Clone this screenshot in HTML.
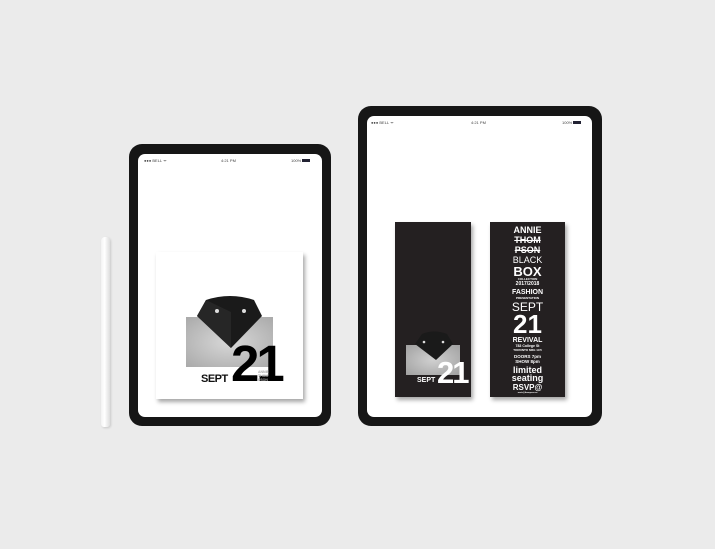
<!DOCTYPE html>
<html><head><style>
*{margin:0;padding:0;box-sizing:border-box}
body{width:715px;height:549px;background:#ebebeb;position:relative;overflow:hidden;font-family:"Liberation Sans",sans-serif}
.a{position:absolute}
.pad{background:#161616;border-radius:13px}
.scr{background:#fff;border-radius:7px}
.st{font-size:4px;color:#444;position:absolute}
.c2 div{position:absolute;left:0;width:75px;text-align:center;color:#fff;font-weight:bold;line-height:1}
</style></head><body>
<div class="a" style="left:101px;top:237px;width:9px;height:190px;background:linear-gradient(90deg,#f2f2f2,#fff 40%,#dcdcdc);border-radius:4px 4px 3px 3px;box-shadow:1px 1px 2px rgba(0,0,0,.15)"></div>
<div class="a pad" style="left:129px;top:144px;width:202px;height:282px"></div>
<div class="a scr" style="left:138px;top:154px;width:184px;height:263px"></div>
<div class="st" style="left:144px;top:158px">●●● BELL ᯤ</div>
<div class="st" style="left:221px;top:158px">4:21 PM</div>
<div class="st" style="left:291px;top:158px">100% <span style="display:inline-block;width:8px;height:3px;background:#223"></span></div>
<div class="a" style="left:156px;top:252px;width:147px;height:147px;background:#fff;box-shadow:2px 3px 4px rgba(0,0,0,.35)"></div>
<div class="a" style="left:186px;top:317px;width:87px;height:50px;background:radial-gradient(#d8d8d8,#a9a9a9)"></div>
<div class="a" style="left:201px;top:373px;font-size:11px;font-weight:bold;color:#111;letter-spacing:-0.5px">SEPT</div>
<div class="a" style="left:231px;top:338px;font-size:51px;font-weight:bold;color:#000;letter-spacing:-3px;line-height:1">21</div>
<div class="a" style="left:258px;top:370px;font-size:3.5px;color:#aaa;font-weight:bold;line-height:4px;width:14px">ANNIE<br>THOM<br>PSON</div>
<div class="a pad" style="left:358px;top:106px;width:244px;height:320px"></div>
<div class="a scr" style="left:367px;top:116px;width:225px;height:301px"></div>
<div class="st" style="left:371px;top:120px">●●● BELL ᯤ</div>
<div class="st" style="left:471px;top:120px">4:21 PM</div>
<div class="st" style="left:562px;top:120px">100% <span style="display:inline-block;width:8px;height:3px;background:#223"></span></div>
<div class="a" style="left:395px;top:222px;width:76px;height:175px;background:#242021;box-shadow:2px 3px 4px rgba(0,0,0,.35)"></div>
<div class="a" style="left:406px;top:345px;width:54px;height:30px;background:radial-gradient(#d0d0d0,#a0a0a0)"></div>
<div class="a" style="left:417px;top:377px;font-size:7px;font-weight:bold;color:#fff">SEPT</div>
<div class="a" style="left:437px;top:357px;font-size:31px;font-weight:bold;color:#fff;letter-spacing:-2px;line-height:1">21</div>
<div class="a c2" style="left:490px;top:222px;width:75px;height:175px;background:#242021;box-shadow:2px 3px 4px rgba(0,0,0,.35)">
<div style="top:4px;font-size:9px">ANNIE</div>
<div style="top:14px;font-size:9px;text-decoration:line-through">THOM</div>
<div style="top:24px;font-size:9px;text-decoration:line-through">PSON</div>
<div style="top:34px;font-size:9px;font-weight:normal">BLACK</div>
<div style="top:43px;font-size:13px">BOX</div>
<div style="top:56px;font-size:3px">COLLECTION</div>
<div style="top:60px;font-size:5px">2017/2018</div>
<div style="top:67px;font-size:7px">FASHION</div>
<div style="top:75px;font-size:3px">PRESENTATION</div>
<div style="top:79px;font-size:12px;font-weight:normal">SEPT</div>
<div style="top:89px;font-size:26px">21</div>
<div style="top:115px;font-size:7px">REVIVAL</div>
<div style="top:123px;font-size:3.5px">783 College St</div>
<div style="top:127px;font-size:3px">TORONTO M6G 1C5</div>
<div style="top:133px;font-size:4.5px">DOORS 7pm</div>
<div style="top:138px;font-size:4.5px">SHOW 8pm</div>
<div style="top:144px;font-size:9px">limited</div>
<div style="top:152px;font-size:9px">seating</div>
<div style="top:162px;font-size:8px">RSVP@</div>
<div style="top:170px;font-size:2px">annie@thompson.ca</div>
</div>
<svg class="a" style="left:0;top:0" width="715" height="549">
<path d="M206,300 Q230,292 254,300 L262,316 L231,348 L197,316 Z" fill="#1a1a1a"/>
<polygon points="206,300 231,312 231,348 197,316" fill="#262626"/>
<circle cx="217" cy="311" r="2" fill="#ddd"/><circle cx="244" cy="311" r="2" fill="#ddd"/>
<path d="M422,334 Q434,329 447,334 L453,344 L436,360 L415,344 Z" fill="#1a1a1a"/>
<circle cx="424" cy="342" r="1.3" fill="#ddd"/><circle cx="443" cy="342" r="1.3" fill="#ddd"/>
</svg>
</body></html>
